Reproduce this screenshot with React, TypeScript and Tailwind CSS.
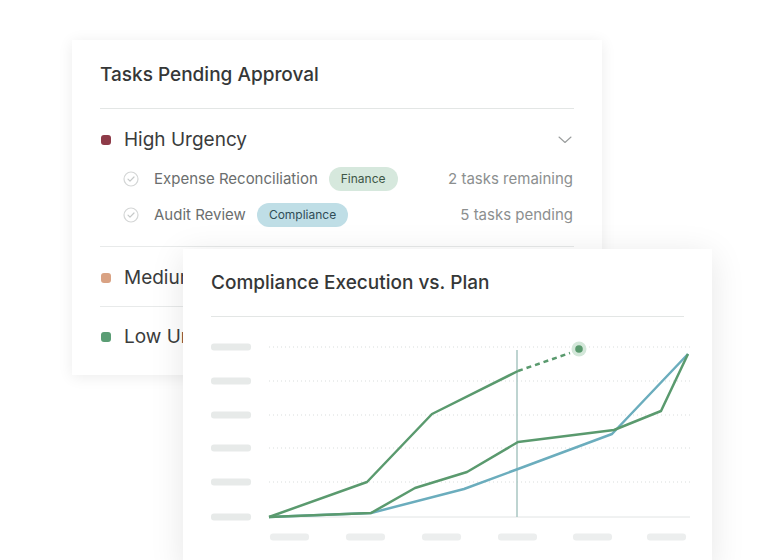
import React from "react";

const font = { fontFamily: "Inter, 'Noto Sans', sans-serif" };

function CheckCircle() {
  return (
    <svg width="16" height="16" viewBox="0 0 16 16" fill="none" className="shrink-0">
      <circle cx="8" cy="8" r="7" stroke="#d4d6d6" strokeWidth="1.2" />
      <path d="M5 8.2l2 2 4-4.2" stroke="#c6c9c9" strokeWidth="1.2" strokeLinecap="round" strokeLinejoin="round" />
    </svg>
  );
}

function Chevron() {
  return (
    <svg width="14" height="8" viewBox="0 0 14 8" fill="none">
      <path d="M1 1l6 5.5L13 1" stroke="#9a9d9d" strokeWidth="1.1" strokeLinecap="round" strokeLinejoin="round" />
    </svg>
  );
}

function Task({ name, tag, tagClass, count }: { name: string; tag: string; tagClass: string; count: string }) {
  return (
    <div className="flex h-[36px] items-center pl-[23px]">
      <CheckCircle />
      <span className="ml-[15px] text-[15px] text-[#6b6e6e]">{name}</span>
      <span className={`ml-[11px] flex h-[24px] items-center rounded-full px-[12px] text-[12px] ${tagClass}`}>{tag}</span>
      <span className="ml-auto mr-px text-[15px] text-[#8c8f8f]">{count}</span>
    </div>
  );
}

function Urgency({ color, label, chevron }: { color: string; label: string; chevron?: boolean }) {
  return (
    <div className="flex h-[28px] items-center">
      <span className={`ml-px h-[10px] w-[10px] rounded-[3px] ${color}`} />
      <span className="ml-[13px] text-[19px] text-[#3a3c3c]">{label}</span>
      {chevron && (
        <span className="ml-auto mr-[2px] flex">
          <Chevron />
        </span>
      )}
    </div>
  );
}

function Chart() {
  const grid = [30, 64, 98, 131, 165];
  const xs = [59, 135, 211, 287, 362, 436];
  const upper = "58,200 156,165 221,97 307,54";
  const lower = "58,200 160,196 204,171 256,155 307,125 403,113 450,94 477,37";
  const blue = "58,200 160,196 253,172 307,152 401,117 477,37";
  return (
    <svg width="482" height="240" viewBox="0 0 482 240" className="block">
      {[...grid, 200].map((y) => (
        <rect key={y} x="0" y={y - 3.5} width="40" height="7" rx="3" fill="#e7eae9" />
      ))}
      {grid.map((y) => (
        <line key={y} x1="58" x2="479" y1={y} y2={y} stroke="#d9dddc" strokeWidth="1" strokeDasharray="1 3" />
      ))}
      <line x1="58" x2="479" y1="200" y2="200" stroke="#e1e4e4" strokeWidth="1" />
      {xs.map((x) => (
        <rect key={x} x={x} y="216.5" width="39" height="7" rx="3" fill="#eceeee" />
      ))}
      <line x1="306" x2="306" y1="33" y2="200" stroke="#a9c6c2" strokeWidth="1.5" />
      <polyline points={blue} fill="none" stroke="#6badbd" strokeWidth="2.5" strokeLinejoin="round" />
      <polyline points={lower} fill="none" stroke="#5a9a6e" strokeWidth="2.5" strokeLinejoin="round" />
      <polyline points={upper} fill="none" stroke="#5a9a6e" strokeWidth="2.5" strokeLinejoin="round" />
      <line x1="307" y1="54" x2="359" y2="36" stroke="#5a9a6e" strokeWidth="2.5" strokeDasharray="5 4" />
      <circle cx="368" cy="32" r="7.5" fill="#d3e7d9" />
      <circle cx="368" cy="32" r="3.8" fill="#5a9a6e" />
    </svg>
  );
}

export default function App() {
  return (
    <div className="h-[560px] w-[784px] overflow-hidden bg-white" style={font}>
      {/* Tasks card */}
      <div className="ml-[72px] mt-[40px] w-[530px] bg-white px-[28px] shadow-[0_2px_14px_rgba(0,0,0,0.08)]">
        <div className="border-b border-[#e3e6e5] pb-[19px] pt-[21px]">
          <h2 className="text-[19px] font-medium leading-[28px] text-[#353737]">Tasks Pending Approval</h2>
        </div>
        <div className="border-b border-[#e8eaea] pb-[13px] pt-[17px]">
          <div className="mb-[7px]">
            <Urgency color="bg-[#8e3b48]" label="High Urgency" chevron />
          </div>
          <Task name="Expense Reconciliation" tag="Finance" tagClass="bg-[#d6e8dd] text-[#3d5646]" count="2 tasks remaining" />
          <Task name="Audit Review" tag="Compliance" tagClass="bg-[#bfdee6] text-[#2f4d57]" count="5 tasks pending" />
        </div>
        <div className="border-b border-[#e8eaea] pb-[14px] pt-[17px]">
          <Urgency color="bg-[#d9a283]" label="Medium Urgency" />
        </div>
        <div className="pb-[24px] pt-[16px]">
          <Urgency color="bg-[#5a9d74]" label="Low Urgency" />
        </div>
      </div>

      {/* Chart card */}
      <div className="relative ml-[183px] mt-[-126px] h-[320px] w-[529px] bg-white px-[28px] shadow-[0_6px_32px_rgba(0,0,0,0.1)]">
        <div className="border-b border-[#e3e6e5] pb-[19px] pt-[20px]">
          <h2 className="text-[19px] font-medium leading-[28px] text-[#353737]">Compliance Execution vs. Plan</h2>
        </div>
        <Chart />
      </div>
    </div>
  );
}
